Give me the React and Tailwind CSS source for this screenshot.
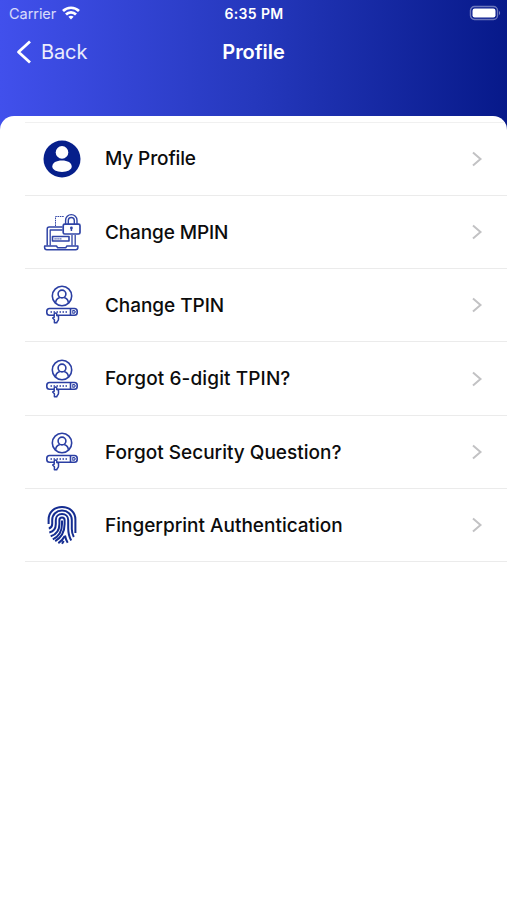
const rows = [
  { title: "My Profile", icon: UserIcon, spacing: "tracking-[-0.12px]" },
  { title: "Change MPIN", icon: LaptopLockIcon, spacing: "tracking-[-0.12px]" },
  { title: "Change TPIN", icon: PinIcon, spacing: "tracking-[-0.06px]" },
  { title: "Forgot 6-digit TPIN?", icon: PinIcon, spacing: "tracking-[0.11px]" },
  { title: "Forgot Security Question?", icon: PinIcon, spacing: "tracking-[0px]" },
  { title: "Fingerprint Authentication", icon: FingerprintIcon, spacing: "tracking-[0px]" },
];

function UserIcon() {
  return (
    <svg viewBox="0 0 40 40" className="h-10 w-10">
      <circle cx="20" cy="20" r="18.5" fill="#061f8b" />
      <circle cx="20" cy="13.400" r="6.3" fill="#fff" />
      <path d="M10.3 27.600c0-4 4-6.200 9.700-6.200s9.700 2.200 9.700 6.200c0 3.200-4.300 5.400-9.700 5.400s-9.700-2.200-9.700-5.400Z" fill="#fff" />
    </svg>
  );
}

function LaptopLockIcon() {
  return (
    <svg viewBox="0 0 40 40" className="h-10 w-10" fill="none" stroke="#3044a6" strokeWidth="1.500" strokeLinejoin="round">
      <path d="M13.500 14V4.500H22" strokeWidth="1" strokeDasharray="1.600 0.700" />
      <path d="M20.500 15H7.200a2 2 0 0 0-2 2v16.500" />
      <path d="M20.500 18H8.200v15.500M30 23v10.500M33.200 23v10.500" strokeWidth="1.300" />
      <path d="M2.600 34H14.500l1.200 1.800h8l1.200-1.800h11v1.500a2.200 2.200 0 0 1-2.200 2.200H4.800a2.200 2.200 0 0 1-2.200-2.200Z" />
      <rect x="10.500" y="24.500" width="16.500" height="4.500" strokeWidth="1.600" />
      <path d="M12.500 26.800h7" strokeWidth="1.200" strokeDasharray="1.200 0.700" />
      <rect x="21.200" y="12.200" width="16.800" height="9.800" rx="1.500" fill="#fff" strokeWidth="1.700" />
      <path d="M23.600 12V8.300a5.700 5.700 0 0 1 11.400 0V12M26.300 12V8.500a3 3 0 0 1 6 0V12" strokeWidth="1.400" />
      <circle cx="29.400" cy="16" r="1.400" fill="#3044a6" stroke="none" />
      <path d="M29.400 16.500v2.500" />
    </svg>
  );
}

function PinIcon() {
  return (
    <svg viewBox="0 0 40 40" className="h-10 w-10" fill="none" stroke="#2b3fa3" strokeWidth="1.600" strokeLinejoin="round">
      <circle cx="20" cy="11" r="9.700" />
      <circle cx="20" cy="9" r="3.900" />
      <path d="M13.700 17.800c0-3 1.500-4.500 4.100-5.300M26.300 17.800c0-3-1.500-4.500-4.100-5.300" />
      <rect x="4.800" y="23.500" width="30.400" height="6.800" rx="2.800" />
      <path d="M28.500 23.500v6.800" />
      <path d="M30.800 25.500h1.500l1 1.400-1 1.400h-1.500Z" strokeWidth="1.100" />
      <path d="M8.500 26.900h17.500" strokeDasharray="1.500 1.500" strokeWidth="1.500" />
      <path d="M12.400 37.800v-3l-1.700-1.800 1.500-.8v-3a1.300 1.300 0 0 1 2.600 0v1.300l1.700.5v3.200c0 1.800-1.600 2.200-1.800 3.600Z" fill="#fff" strokeWidth="1.500" />
    </svg>
  );
}

function FingerprintIcon() {
  return (
    <svg viewBox="0 0 40 40" className="h-10 w-10" fill="none" stroke="#152d91" strokeWidth="2">
      <path d="M6.600 19v-4.500C6.600 7.200 12.400 2 20 2s13.400 5.200 13.400 12.500V28" />
      <path d="M6.800 23.500c2.300-.6 3.400-2 3.400-4.500v-4c0-5.500 4.200-9.500 9.800-9.500s9.800 4 9.800 9.500v9c0 3 .600 5.500 2 8" />
      <path d="M7.300 27.500c4.300-1 6.500-4 6.500-8.500v-4c0-3.500 2.600-6 6.200-6s6.200 2.500 6.200 6v8c0 5 1 9 3 12.500" />
      <path d="M8.700 31.300c5.700-1.800 8.700-6 8.700-12.300v-4a2.600 2.600 0 0 1 5.200 0v4c0 7.500-3.300 13.500-9.400 17.200" />
      <path d="M10.800 34.300c6-2.700 9.200-8 9.200-15.300v-3.500M16.300 38.200c2.700-1.800 4.900-4.200 6.300-7M23 30.500c.600 3 1.500 5.400 2.700 7.300M20 38.700l1.800-2.700" />
    </svg>
  );
}

function StatusBar() {
  return (
    <div className="grid h-7 grid-cols-3 items-center pr-1.5 pl-[9px] leading-7">
      <div className="flex items-center gap-1.5">
        <span className="text-[14.500px] tracking-[-0.050px] text-white/80">Carrier</span>
        <svg viewBox="0 0 18 14" className="-mt-0.5 h-3.5 w-[18px]" fill="none" stroke="#fff" strokeWidth="2.700">
          <path d="M1 5a11.500 11.500 0 0 1 16 0M4 8.500a7 7 0 0 1 10 0" />
          <path d="M6.400 10.800a3.900 3.900 0 0 1 5.200 0L9 13.500Z" fill="#fff" stroke="none" />
        </svg>
      </div>
      <span className="-ml-0.5 text-center text-[14px] font-semibold tracking-[0.350px] text-white">6:35 PM</span>
      <svg viewBox="0 0 32 16" className="-mt-0.5 h-4 w-8 justify-self-end">
        <rect x="1.500" y="1.500" width="27" height="13" rx="4" fill="none" stroke="#fff" strokeOpacity="0.400" strokeWidth="1.400" />
        <rect x="3.500" y="3.500" width="23" height="9" rx="2.200" fill="#fff" />
        <path d="M30 6v4c1.500-.5 1.500-3.500 0-4Z" fill="#fff" fillOpacity="0.450" />
      </svg>
    </div>
  );
}

function NavBar() {
  return (
    <div className="grid h-12 grid-cols-3 items-center px-4">
      <div className="flex items-center gap-[9px] text-white">
        <svg viewBox="0 0 16 24" className="h-6 w-4" fill="none" stroke="currentColor" strokeWidth="2.800" strokeLinejoin="round">
          <path d="M14 1.500 2.500 12 14 22.500" />
        </svg>
        <span className="text-[20px] tracking-[-0.100px] text-white/90">Back</span>
      </div>
      <h1 className="text-center text-[20px] font-semibold tracking-[-0.050px] text-white">Profile</h1>
    </div>
  );
}

function Row({ title, icon: Icon, spacing }) {
  return (
    <li className="flex h-[73.300px] items-center border-b-[1.500px] border-[#ebebeb] pr-6 pl-[17px]">
      <Icon />
      <span className={`ml-[23px] flex-1 pt-[2px] text-[19px] font-medium whitespace-nowrap text-[#0c0c0c] ${spacing}`}>{title}</span>
      <svg viewBox="0 0 12 16" className="h-4 w-3" fill="none" stroke="#c2c2c4" strokeWidth="2">
        <path d="m2 1.500 7.500 6.500L2 14.500" />
      </svg>
    </li>
  );
}

export default function App() {
  return (
    <div className="flex h-[900px] w-[507px] flex-col overflow-hidden bg-white font-[Inter,sans-serif]">
      <header className="h-[130px] shrink-0 bg-linear-to-r from-[#4150ec] via-[#2538bd] to-[#07198a]">
        <StatusBar />
        <NavBar />
      </header>
      <main className="-mt-[14.500px] flex-1 overflow-hidden rounded-t-[14px] bg-white pt-1.5 pl-[25px]">
        <ul className="border-t-[1.500px] border-[#f0f0f0]">
          {rows.map((row) => (
            <Row key={row.title} {...row} />
          ))}
        </ul>
      </main>
    </div>
  );
}
